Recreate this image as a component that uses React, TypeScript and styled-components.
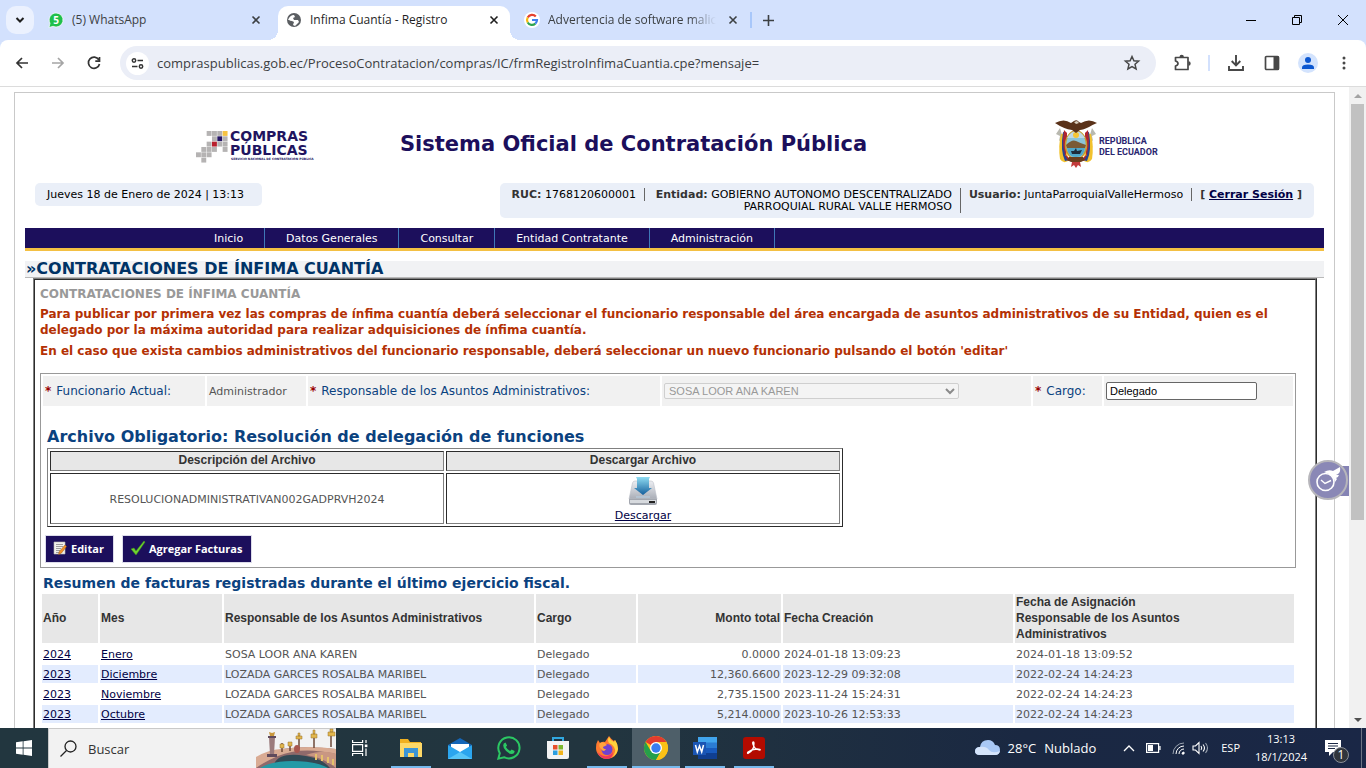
import React from 'react';
import styled, { createGlobalStyle, css } from 'styled-components';

const ui = '"Open Sans", "Noto Sans", sans-serif';
const verdana = '"DejaVu Sans", sans-serif';
const arial = '"Liberation Sans", sans-serif';
const navy = '#1c0f5c';

const GlobalStyle = createGlobalStyle`
  *, *::before, *::after { box-sizing: border-box; }
  body { margin: 0; background: #fff; font-family: ${verdana}; }
  h1, h2, h3, p { margin: 0; }
  button { border: 0; background: none; padding: 0; font: inherit; color: inherit; }
  svg { display: block; flex: none; overflow: visible; }
`;

const Shell = styled.div`
  display: flex;
  flex-direction: column;
  height: 100vh;
  overflow: hidden;
`;

/* ---------- browser frame ---------- */

const TabStrip = styled.header`
  display: flex;
  align-items: flex-end;
  flex: none;
  height: 40px;
  padding-left: 6px;
  background: #d3e1fd;
  color: #3c4043;
  font: 12px/16px ${ui};
`;

const TabSearch = styled.button`
  display: grid;
  place-items: center;
  align-self: center;
  width: 28px;
  height: 28px;
  margin-right: 4px;
  border-radius: 10px;
  background: #ebf1fe;
`;

const Tab = styled.div<{ $active?: boolean; $first?: boolean }>`
  position: relative;
  display: flex;
  align-items: center;
  gap: 8px;
  width: ${p => (p.$active ? 232 : 240)}px;
  height: 34px;
  padding: 0 ${p => (p.$first ? 14 : 8)}px 6px 10px;
  ${p =>
    p.$active &&
    css`
      padding-left: 8px;
      border-radius: 10px 10px 0 0;
      background: #fff;
      color: #1f1f1f;
      &::before,
      &::after {
        content: '';
        position: absolute;
        bottom: 0;
        width: 10px;
        height: 10px;
      }
      &::before {
        right: 100%;
        background: radial-gradient(circle at 0 0, transparent 10px, #fff 10px);
      }
      &::after {
        left: 100%;
        background: radial-gradient(circle at 100% 0, transparent 10px, #fff 10px);
      }
    `}
`;

const TabTitle = styled.span<{ $fade?: boolean }>`
  flex: 1;
  overflow: hidden;
  white-space: nowrap;
  ${p => p.$fade && 'mask-image: linear-gradient(90deg, #000 84%, transparent);'}
`;

const IconButton = styled.button<{ $w?: number; $h?: number }>`
  display: grid;
  place-items: center;
  flex: none;
  width: ${p => p.$w ?? 36}px;
  height: ${p => p.$h ?? 34}px;
`;

const Rule = styled.span<{ $color: string; $gap: number }>`
  width: 2px;
  height: 16px;
  margin: 0 ${p => p.$gap}px;
  background: ${p => p.$color};
`;

const NewTab = styled.div`
  display: flex;
  align-items: center;
  align-self: center;
`;

const WindowControls = styled.div`
  display: flex;
  align-self: center;
  margin-left: auto;
`;

const ToolbarBack = styled.div`
  flex: none;
  background: #d3e1fd;
`;

const Toolbar = styled.div`
  display: flex;
  align-items: center;
  height: 47px;
  padding: 0 4px;
  border-bottom: 1px solid #dcdcdc;
  border-radius: 8px 8px 0 0;
  background: #fff;
  color: #474747;
`;

const Omnibox = styled.div`
  display: flex;
  align-items: center;
  flex: 1;
  height: 34px;
  margin: 0 8px;
  padding: 0 6px;
  border-radius: 17px;
  background: #ebeef7;
`;

const SiteInfo = styled.button`
  display: grid;
  place-items: center;
  width: 23px;
  height: 23px;
  border-radius: 50%;
  background: #fff;
`;

const Address = styled.input`
  flex: 1;
  min-width: 0;
  padding: 0 8px;
  border: 0;
  background: transparent;
  color: #3c3e42;
  font: 13px/20px ${ui};
`;

/* ---------- web page ---------- */

const Viewport = styled.div`
  position: relative;
  display: flex;
  flex: 1;
  min-height: 0;
  overflow: hidden;
`;

const Page = styled.main`
  display: flex;
  flex-direction: column;
  flex: 1;
  min-width: 0;
  margin: 5px 14px 0;
  padding: 0 10px;
  border: 1px solid #c9c9c9;
  border-bottom: 0;
`;

const Banner = styled.div`
  display: flex;
  align-items: center;
  height: 90px;
  padding: 11px 167px 0 171px;
`;

const SiteTitle = styled.h1`
  margin-left: 88px;
  margin-right: auto;
  color: ${navy};
  font: bold 21px/28px ${verdana};
  white-space: nowrap;
`;

const InfoRow = styled.div`
  display: flex;
  justify-content: space-between;
  align-items: flex-start;
  margin: 0 10px 10px;
  color: #000;
  font-size: 11px;
  line-height: 12px;
`;

const DatePill = styled.div`
  padding: 6px 18px 5px 12px;
  border-radius: 5px;
  background: #eaeff8;
`;

const SessionPill = styled.div`
  display: flex;
  align-items: flex-start;
  padding: 5px 4px;
  border-radius: 5px;
  background: #eaeff8;
`;

const SessionItem = styled.div<{ $wide?: boolean }>`
  padding: 1px 8px 0;
  border-right: 1px solid #666;
  text-align: right;
  ${p => p.$wide && 'width: 316px;'}
  &:last-child { border-right: 0; }
  b { color: #333; }
`;

const Link = styled.a`
  color: #000044;
  text-decoration: underline;
`;

const Nav = styled.nav`
  display: flex;
  height: 23px;
  padding-left: 168px;
  border-bottom: 3px solid #f4c043;
  background: ${navy};
`;

const NavLink = styled.a`
  padding: 0 21px;
  border-right: 1px solid #3f78b8;
  color: #fff;
  font-size: 11px;
  line-height: 22px;
  text-decoration: none;
`;

const SectionTitle = styled.h2`
  height: 17px;
  margin-top: 10px;
  padding-left: 1px;
  border-bottom: 1px solid #b9b9b9;
  background: #f1f2f4;
  color: #003366;
  font: bold 16px/16px ${verdana};
`;

const Box = styled.section`
  flex: 1;
  margin: 0 7px 0 8px;
  padding: 6px 19px 0 5px;
  border: 2px ridge #808080;
  border-bottom: 0;
`;

const BoxTitle = styled.h3`
  color: #999;
  font: bold 12px/16px ${verdana};
`;

const Notice = styled.p`
  margin-top: 4px;
  color: #b43104;
  font: bold 12px/16px ${verdana};
  & + & { margin-top: 5px; }
`;

const Panel = styled.form`
  margin-top: 14px;
  padding: 2px 2px 4px;
  border: 1px solid #999;
`;

const Fields = styled.div`
  display: grid;
  grid-template-columns: 162fr 99fr 352fr 369fr 69fr 189fr;
  gap: 2px;
  height: 30px;
`;

const FieldCell = styled.div`
  display: flex;
  align-items: center;
  min-width: 0;
  padding: 0 1px 0 2px;
  background: #f1f1f1;
  color: #555;
  font-size: 11px;
`;

const Label = styled.label`
  color: #0b427f;
  font-size: 12px;
  white-space: nowrap;
  &::before {
    content: '*';
    margin-right: 5px;
    color: #990000;
    font-weight: bold;
  }
`;

const SelectWrap = styled.div`
  position: relative;
  width: 295px;
  svg { position: absolute; right: 4px; top: 5px; }
`;

const Select = styled.select`
  appearance: none;
  display: block;
  width: 100%;
  height: 16px;
  padding: 0 4px;
  border: 1px solid #cfcfcf;
  border-radius: 2px;
  background: #f4f4f4;
  color: #999;
  font: 11px/14px ${arial};
  opacity: 1;
`;

const TextBox = styled.input`
  width: 151px;
  height: 18px;
  padding: 1px 3px;
  border: 1px solid #666;
  border-radius: 2px;
  background: #fff;
  color: #000;
  font: 11px/14px ${arial};
`;

const FileTitle = styled.h3`
  margin: 21px 0 1px 4px;
  color: #0b427f;
  font: bold 16px/20px ${verdana};
`;

const FileTable = styled.table`
  width: 796px;
  max-width: 100%;
  margin-left: 4px;
  border: 1px outset #808080;
  border-spacing: 2px;
  table-layout: fixed;
  th, td {
    padding: 2px 1px 0;
    border: 1px inset #808080;
    text-align: center;
  }
  th {
    padding: 0 1px 2px;
    background: #e7e7e7;
    color: #333;
    font: bold 12px/16px ${arial};
  }
  td {
    color: #555;
    font: 11px/15px ${verdana};
  }
  svg { margin: 0 auto; }
`;

const Actions = styled.div`
  display: flex;
  gap: 8px;
  margin: 8px 0 0 2px;
`;

const ActionButton = styled.button`
  display: flex;
  align-items: center;
  gap: 3px;
  height: 28px;
  padding: 0 9px 0 7px;
  border: 1px solid #dcdcea;
  background: ${navy};
  color: #fff;
  font: bold 11px/16px ${ui};
`;

const SummaryTitle = styled.h3`
  margin: 7px 0 1px 3px;
  color: #0b427f;
  font: bold 14px/16px ${verdana};
`;

const SummaryTable = styled.table`
  width: 100%;
  border-spacing: 2px;
  table-layout: fixed;
  th, td {
    padding: 2px 1px 0;
    text-align: left;
  }
  th {
    height: 49px;
    padding: 0 1px 1px;
    background: #e7e7e7;
    color: #333;
    font: bold 12px/16px ${arial};
  }
  td {
    color: #555;
    font: 11px/16px ${verdana};
    white-space: nowrap;
  }
  tbody tr:nth-child(even) td { background: #e3ecfe; }
  th:nth-child(5), td:nth-child(5) { text-align: right; }
`;

const HeadText = styled.div`
  max-width: 190px;
`;

const Scrollbar = styled.div`
  display: flex;
  flex-direction: column;
  align-items: center;
  flex: none;
  width: 17px;
  background: #f1f1f1;
`;

const Thumb = styled.div`
  flex: 416;
  width: 13px;
  background: #c1c1c1;
`;

const TrackRest = styled.div`
  flex: 191;
`;

const HelpBadge = styled.button`
  position: absolute;
  top: 373px;
  right: 17px;
`;

/* ---------- taskbar ---------- */

const Taskbar = styled.footer`
  display: flex;
  flex: none;
  height: 40px;
  background: linear-gradient(90deg, #22363f 0%, #22353f 45%, #1a2842 75%, #1a2746 100%);
  color: #fff;
  font: 14px/18px ${ui};
`;

const SearchBox = styled.label`
  display: flex;
  align-items: center;
  width: 288px;
  padding-left: 11px;
  border: 1px solid #c9c9c9;
  border-right: 0;
  border-bottom: 0;
  background: #f2f2f2;
  color: #222;
  svg:last-child { align-self: flex-end; }
`;

const SearchInput = styled.input`
  flex: 1;
  min-width: 0;
  padding: 0 0 0 11px;
  border: 0;
  background: transparent;
  font: 13px/18px ${ui};
  &::placeholder { color: #333; opacity: 1; }
`;

const Apps = styled.div`
  display: flex;
  gap: 1px;
  margin-left: 3px;
`;

const AppButton = styled.button<{ $open?: boolean; $current?: boolean }>`
  position: relative;
  display: grid;
  place-items: center;
  width: 48px;
  height: 40px;
  background: ${p => (p.$current ? '#4e5f69' : 'none')};
  ${p =>
    p.$open &&
    css`
      &::after {
        content: '';
        position: absolute;
        bottom: 0;
        left: ${p.$current ? 0 : 4}px;
        right: ${p.$current ? 0 : 4}px;
        height: 2px;
        background: #76b9ed;
      }
    `}
`;

const Tray = styled.div`
  display: flex;
  align-items: center;
  margin-left: auto;
`;

const Weather = styled.button`
  display: flex;
  align-items: center;
  gap: 8px;
  margin-right: 22px;
  font: 13px/18px ${ui};
`;

const Language = styled.button`
  margin: 0 8px 0 11px;
  font: 11px/16px ${ui};
`;

const Clock = styled.div`
  width: 66px;
  font: 11px/18px ${ui};
  text-align: center;
`;

const Notifications = styled.button`
  position: relative;
  width: 36px;
  height: 40px;
  margin-right: 11px;
  svg { position: absolute; left: 11px; top: 12px; }
`;

const Count = styled.span`
  position: absolute;
  left: 19px;
  top: 19px;
  width: 16px;
  height: 16px;
  border: 1px solid #8a8f98;
  border-radius: 50%;
  background: #30353c;
  font: 12px/14px ${ui};
  text-align: center;
`;

const DesktopEdge = styled.div`
  width: 5px;
  height: 40px;
  border-left: 1px solid #6b7484;
`;

/* ---------- drawings ---------- */

const CloseIcon = () => (
  <svg width="8" height="8" viewBox="0 0 8 8" stroke="currentColor" strokeWidth="1.6">
    <path d="M.5.5l7 7M7.500.5l-7 7" />
  </svg>
);

const ComprasLogo = () => {
  const cells: [number, number, string][] = [
    [2, 0, '#b5b3b3'], [3, 0, '#b5b3b3'], [4, 0, '#b5b3b3'], [5, 0, '#f6c343'],
    [3, 1, '#b5b3b3'], [4, 1, '#241566'], [5, 1, '#b5b3b3'],
    [2, 2, '#b5b3b3'], [3, 2, '#b81f2d'], [4, 2, '#b5b3b3'], [5, 2, '#b5b3b3'],
    [1, 3, '#b5b3b3'], [2, 3, '#b5b3b3'], [3, 3, '#b5b3b3'], [5, 3, '#b5b3b3'],
    [0, 4, '#b5b3b3'], [1, 4, '#b5b3b3'], [2, 4, '#b5b3b3'],
    [1, 5, '#b5b3b3'],
  ];
  return (
    <svg width="116" height="40" viewBox="0 -6 116 40" role="img" aria-label="Compras Públicas">
      {cells.map(([c, r, fill]) => (
        <rect key={`${c}-${r}`} x={c * 5.33} y={1 + r * 5.33} width="4.9" height="4.9" fill={fill} />
      ))}
      <g fill="#21145f" fontFamily="DejaVu Sans, sans-serif" fontWeight="bold">
        <text x="34" y="11" fontSize="14">COMPRAS</text>
        <text x="34" y="25" fontSize="14">PÚBLICAS</text>
        <text x="35" y="30" fontSize="3">SERVICIO NACIONAL DE CONTRATACIÓN PÚBLICA</text>
      </g>
    </svg>
  );
};

const EcuadorLogo = () => (
  <svg width="102" height="50" viewBox="0 0 102 50" role="img" aria-label="República del Ecuador">
    <path d="M5 9L1 15l4 2-1 5 4-3zM37 9l4 6-4 2 1 5-4-3z" fill="#b9b9b0" />
    <path d="M6 15q-3 12-1 25 3 5 8 2l-2-28z" fill="#f2c22e" />
    <path d="M36 15q3 12 1 25-3 5-8 2l2-28z" fill="#f2c22e" />
    <path d="M8 13l4 1-2 22 5 5-5 1q-5-10-2-29z" fill="#27458f" />
    <path d="M34 13l-4 1 2 22-5 5 5 1q5-10 2-29z" fill="#27458f" />
    <path d="M9 11l3 3-1 22 5 5-3 1q-7-12-4-31zM33 11l-3 3 1 22-5 5 3 1q7-12 4-31z" fill="#b3242e" />
    <ellipse cx="21" cy="26" rx="10.500" ry="14" fill="#8cc4d9" stroke="#c99a2b" strokeWidth="1.500" />
    <path d="M12 19q4-7 9-7t9 7z" fill="#bfd9e6" />
    <circle cx="21" cy="16" r="3" fill="#f5c534" />
    <path d="M11 26q6-6 10-4t10 4l-1 3H12z" fill="#7a5a35" />
    <path d="M12 29h18q-1 9-9 9t-9-9z" fill="#4fa7c9" />
    <path d="M16 32h3l2-3 1 3 5-1-2 4h-8z" fill="#1e2b3a" />
    <path d="M0 4q9-5 16 0l3-2q3-2 5 1l2 1q8-5 16 0-5 2-8 4-6 3-9 3l-4 3-4-3Q9 10 0 4z" fill="#5a3219" />
    <path d="M19 3l3-1 2 2-3 1z" fill="#d8cfbf" />
    <path d="M14 38h14l2 3-4 2H16l-4-2z" fill="#6b3e1d" />
    <path d="M17 43h8l1 5-3-2-2 3-2-3-3 2z" fill="#c23a3a" />
    <g fill="#2b2670" fontFamily="Roboto, sans-serif" fontWeight="bold" fontSize="9">
      <text x="44" y="25">REPÚBLICA</text>
      <text x="44" y="36">DEL ECUADOR</text>
    </g>
  </svg>
);

const DownloadDisk = () => (
  <svg width="32" height="32" viewBox="0 0 32 32" aria-hidden="true">
    <defs>
      <linearGradient id="disk" x1="0" y1="0" x2="0" y2="1">
        <stop offset="0" stopColor="#eceef2" />
        <stop offset="1" stopColor="#a9adb6" />
      </linearGradient>
      <linearGradient id="arrow" x1="0" y1="0" x2="0" y2="1">
        <stop offset="0" stopColor="#8fdcf2" />
        <stop offset="1" stopColor="#155f9c" />
      </linearGradient>
    </defs>
    <path d="M8 5h16q2 0 2.500 2L30 23H2L5.500 7Q6 5 8 5z" fill="url(#disk)" stroke="#bcc0c8" strokeWidth=".6" />
    <path d="M2 23h28v4q0 2-2 2H4q-2 0-2-2z" fill="#a3a7af" />
    <path d="M3 24h26v3H3z" fill="#d7dade" />
    <path d="M22 25h6v2h-6z" fill="#222" />
    <path d="M9 21h14" stroke="#b9d3e6" />
    <path d="M9 1h14l-1 2v9h3l-9 7-9-7h3V3z" fill="url(#arrow)" />
  </svg>
);

const EditIcon = () => (
  <svg width="15" height="16" viewBox="0 0 15 16" aria-hidden="true">
    <path d="M1 1h11v12H1z" fill="#f1f1ec" stroke="#b9b9b0" strokeWidth=".6" />
    <path d="M3 3.500h7M3 5.500h7M3 7.500h5M3 9.500h4M3 11.500h4" stroke="#888" strokeWidth=".8" />
    <path d="M12 4l1.500 1.500-5 6.500-3 1.500.8-3z" fill="#f0932b" stroke="#a35a12" strokeWidth=".5" />
  </svg>
);

const CheckIcon = () => (
  <svg width="16" height="16" viewBox="0 0 16 16" aria-hidden="true">
    <path d="M1 8l3-1 2 3 8-10 1 1-9 13z" fill="#6fd12f" stroke="#3f9417" strokeWidth=".5" />
  </svg>
);

const HelpIcon = () => (
  <svg width="41" height="40" viewBox="0 0 41 40" aria-hidden="true">
    <path d="M28 6h13v30H28z" fill="#8583b4" />
    <circle cx="20" cy="20" r="19" fill="#8a88b6" stroke="#b7b6bb" strokeWidth="2" />
    <circle cx="17.500" cy="22" r="8.500" fill="none" stroke="#fff" strokeWidth="1.600" />
    <path d="M13 20l4 3.500 6-3" fill="none" stroke="#fff" strokeWidth="1.400" />
    <path d="M16 12q5-3 9-1l7-4q1 5-2 7l-2 1h3q-1 3-3 3l1 1-2 3q-1-7-11-10z" fill="#fff" />
  </svg>
);

const ChromeIcon = () => (
  <svg width="24" height="24" viewBox="0 0 24 24" aria-hidden="true">
    <circle cx="12" cy="12" r="12" fill="#fbc116" />
    <path d="M12 12L1.600 6A12 12 0 0 1 22.400 6H12z" fill="#e33b2e" />
    <path d="M1.600 6A12 12 0 0 0 12 24l5.200-9L12 12 6.800 15z" fill="#269f4a" />
    <path d="M12 24a12 12 0 0 0 10.400-18H12l5.200 9z" fill="#fbc116" />
    <circle cx="12" cy="12" r="6" fill="#fff" />
    <circle cx="12" cy="12" r="4.700" fill="#3a7df0" />
  </svg>
);

const BridgeArt = () => (
  <svg width="80" height="39" viewBox="0 0 80 39" aria-hidden="true">
    <path d="M0 31q10-8 22-10 22-5 58-1v19H0z" fill="#8f6a6b" />
    <path d="M0 28q14-8 26-8 28-4 54 0v5Q45 17 22 27 8 33 0 39z" fill="#d9ab93" />
    <path d="M17 39q2-15 26-13 22 2 31 13z" fill="#324a55" />
    <path d="M4 39q12-7 32-7 24 0 36 7z" fill="#259aa6" />
    <path d="M50 26q16 2 30 13V25q-12-5-30 1z" fill="#c99782" />
    <path d="M13 8h6l-1 18h-4z" fill="#9b7b7c" />
    <path d="M11 25h10v3H11zM12 7h8v2h-8z" fill="#5f4a5c" />
    <path d="M14 7l-1-4 3 1 3-1-1 4z" fill="#c8973c" />
    <path d="M26 23v-9M34 22v-9M43 20V9M58 19V5M75 18V4" stroke="#6d4a3a" strokeWidth="1.500" />
    <g fill="#e2b74d" stroke="#96722f" strokeWidth=".5">
      <path d="M24 15h4v4h-4zM32 13h4v4h-4zM40 7h6v3h-6zM42 4h2v3h-2z" />
      <path d="M55 5h6v4h-6zM57 1h2v4h-2zM72 3h7v4h-7zM74 0h3v3h-3z" />
    </g>
    <ellipse cx="41" cy="20" rx="3" ry="4" fill="#a8574f" />
    <path d="M60 25v6M66 26v6M72 28v6M77 30v6" stroke="#e6c16b" strokeWidth="2" />
  </svg>
);

type Row = [string, string, string, string, string, string, string];

const headings = [
  'Año',
  'Mes',
  'Responsable de los Asuntos Administrativos',
  'Cargo',
  'Monto total',
  'Fecha Creación',
  'Fecha de Asignación Responsable de los Asuntos Administrativos',
];

const widths = [56, 122, 310, 100, 143, 230, 279];

const rows: Row[] = [
  ['2024', 'Enero', 'SOSA LOOR ANA KAREN', 'Delegado', '0.0000', '2024-01-18 13:09:23', '2024-01-18 13:09:52'],
  ['2023', 'Diciembre', 'LOZADA GARCES ROSALBA MARIBEL', 'Delegado', '12,360.6600', '2023-12-29 09:32:08', '2022-02-24 14:24:23'],
  ['2023', 'Noviembre', 'LOZADA GARCES ROSALBA MARIBEL', 'Delegado', '2,735.1500', '2023-11-24 15:24:31', '2022-02-24 14:24:23'],
  ['2023', 'Octubre', 'LOZADA GARCES ROSALBA MARIBEL', 'Delegado', '5,214.0000', '2023-10-26 12:53:33', '2022-02-24 14:24:23'],
];

const BrowserFrame = () => (
  <>
    <TabStrip>
      <TabSearch aria-label="Buscar pestañas">
        <svg width="10" height="10" viewBox="0 0 10 10" fill="none" stroke="#1f1f1f" strokeWidth="2">
          <path d="M1.500 3L5 6.500 8.500 3" />
        </svg>
      </TabSearch>
      <Tab $first>
        <svg width="16" height="16" viewBox="0 0 16 16">
          <path d="M8 1a7 7 0 1 1-3 13.300L1 15.500l1-4.200A7 7 0 0 1 8 1z" fill="#1fbf4b" stroke="#fff" strokeWidth=".7" />
          <text x="8" y="12" fontSize="10" fontWeight="bold" fontFamily="Open Sans, sans-serif" fill="#fff" textAnchor="middle">5</text>
        </svg>
        <TabTitle>(5) WhatsApp</TabTitle>
        <IconButton $w={16} $h={16} aria-label="Cerrar"><CloseIcon /></IconButton>
      </Tab>
      <Tab $active>
        <svg width="16" height="16" viewBox="0 0 16 16">
          <circle cx="8" cy="8" r="7" fill="#5b5e62" />
          <path d="M2 8q2-5 6-5l1 2-2 1 1 2 4 0 1 2-3 3-1 1-2-1 1-3-2-1q-2 0-3-1z" fill="#fff" />
        </svg>
        <TabTitle>Infima Cuantía - Registro</TabTitle>
        <IconButton $w={16} $h={16} aria-label="Cerrar"><CloseIcon /></IconButton>
      </Tab>
      <Tab>
        <svg width="20" height="16" viewBox="0 0 20 16">
          <circle cx="12" cy="8" r="8" fill="#fff" />
          <g fill="none" strokeWidth="2.200">
            <path d="M15.800 4.500A5 5 0 0 0 7.700 5.500" stroke="#e4412f" />
            <path d="M7.700 5.500a5 5 0 0 0 0 5" stroke="#f6b90c" />
            <path d="M7.700 10.500a5 5 0 0 0 7.600 1.200" stroke="#30a552" />
            <path d="M15.300 11.700A5 5 0 0 0 17 8h-5" stroke="#3f80ee" />
          </g>
        </svg>
        <TabTitle $fade>Advertencia de software malicioso</TabTitle>
        <IconButton $w={18} $h={16} aria-label="Cerrar"><CloseIcon /></IconButton>
      </Tab>
      <NewTab>
        <Rule $color="#a8c7fa" $gap={0} />
        <IconButton $w={32} aria-label="Nueva pestaña">
          <svg width="11" height="11" viewBox="0 0 11 11" stroke="#3c4043" strokeWidth="1.600">
            <path d="M5.500 0v11M0 5.500h11" />
          </svg>
        </IconButton>
      </NewTab>
      <WindowControls>
        <IconButton $w={46} aria-label="Minimizar">
          <svg width="10" height="10" viewBox="0 0 10 10" stroke="#000"><path d="M0 5.500h10" /></svg>
        </IconButton>
        <IconButton $w={46} aria-label="Restaurar">
          <svg width="10" height="10" viewBox="0 0 10 10" stroke="#000" fill="none">
            <path d="M.5 2.500h7v7h-7zM2.500 2.500v-2h7v7h-2" />
          </svg>
        </IconButton>
        <IconButton $w={46} aria-label="Cerrar ventana">
          <svg width="10" height="10" viewBox="0 0 10 10" stroke="#000"><path d="M0 0l10 10M10 0L0 10" /></svg>
        </IconButton>
      </WindowControls>
    </TabStrip>
    <ToolbarBack>
      <Toolbar>
        <IconButton aria-label="Atrás">
          <svg width="14" height="12" viewBox="0 0 14 12" fill="none" stroke="#333" strokeWidth="1.700">
            <path d="M13 6H2M7 1L2 6l5 5" />
          </svg>
        </IconButton>
        <IconButton aria-label="Adelante">
          <svg width="14" height="12" viewBox="0 0 14 12" fill="none" stroke="#a5a5a5" strokeWidth="1.700">
            <path d="M1 6h11M7 1l5 5-5 5" />
          </svg>
        </IconButton>
        <IconButton aria-label="Recargar">
          <svg width="14" height="14" viewBox="0 0 14 14" fill="none" stroke="#333" strokeWidth="1.700">
            <path d="M11.800 3.800A5.600 5.600 0 1 0 12.500 8M12.500 1v4.200H8.300" />
          </svg>
        </IconButton>
        <Omnibox>
          <SiteInfo aria-label="Información del sitio">
            <svg width="13" height="11" viewBox="0 0 13 11" fill="none" stroke="#333" strokeWidth="1.500">
              <circle cx="3" cy="2.500" r="1.700" />
              <circle cx="10" cy="8.500" r="1.700" />
              <path d="M6.500 2.500H12M1 8.500h5.500" />
            </svg>
          </SiteInfo>
          <Address
            aria-label="Dirección"
            defaultValue="compraspublicas.gob.ec/ProcesoContratacion/compras/IC/frmRegistroInfimaCuantia.cpe?mensaje="
          />
          <IconButton aria-label="Marcador">
            <svg width="18" height="18" viewBox="0 0 18 18" fill="none" stroke="#474747" strokeWidth="1.500">
              <path d="M9 2.500l1.900 4.300 4.700.4-3.600 3.100 1.100 4.600L9 12.500l-4.100 2.400L6 10.300 2.400 7.200l4.700-.4z" />
            </svg>
          </IconButton>
        </Omnibox>
        <IconButton aria-label="Extensiones">
          <svg width="18" height="18" viewBox="0 0 18 18">
            <path
              d="M2.500 3.500H15V15.500H2.500V12q2.500-.7 2.500-2.500T2.500 7z"
              fill="none" stroke="#474747" strokeWidth="1.700" strokeLinejoin="round"
            />
            <path d="M6.500 3a2.200 2.200 0 0 1 4.400 0zM15.500 7.300a2.200 2.200 0 0 1 0 4.400z" fill="#474747" />
          </svg>
        </IconButton>
        <Rule $color="#d3e1fd" $gap={8} />
        <IconButton aria-label="Descargas">
          <svg width="18" height="18" viewBox="0 0 18 18" fill="none" stroke="#474747" strokeWidth="1.900">
            <path d="M9 1v10M4.700 7L9 11.300 13.300 7M2 12v4h14v-4" />
          </svg>
        </IconButton>
        <IconButton aria-label="Panel lateral">
          <svg width="16" height="16" viewBox="0 0 16 16">
            <rect x="1.500" y="1.500" width="13" height="13" rx="1" fill="none" stroke="#474747" strokeWidth="1.700" />
            <path d="M9.500 1.500H15v13H9.500z" fill="#474747" />
          </svg>
        </IconButton>
        <IconButton aria-label="Perfil">
          <svg width="20" height="20" viewBox="0 0 20 20">
            <circle cx="10" cy="10" r="10" fill="#d3e3fd" />
            <circle cx="10" cy="7" r="3" fill="#0b57d0" />
            <path d="M4 16v-1.500q0-3 6-3t6 3V16z" fill="#0b57d0" />
          </svg>
        </IconButton>
        <IconButton aria-label="Menú">
          <svg width="4" height="14" viewBox="0 0 4 14" fill="#474747">
            <circle cx="2" cy="2" r="1.500" />
            <circle cx="2" cy="7" r="1.500" />
            <circle cx="2" cy="12" r="1.500" />
          </svg>
        </IconButton>
      </Toolbar>
    </ToolbarBack>
  </>
);

const WindowsTaskbar = () => (
  <Taskbar>
    <AppButton aria-label="Inicio">
      <svg width="16" height="16" viewBox="0 0 16 16" fill="#fff">
        <path d="M0 2.300l6.700-1v6.200H0zM7.500 1.200L16 0v7.500H7.500zM0 8.400h6.700v6.300L0 13.700zM7.500 8.400H16V16l-8.500-1.200z" />
      </svg>
    </AppButton>
    <SearchBox>
      <svg width="17" height="17" viewBox="0 0 17 17" fill="none" stroke="#222" strokeWidth="1.300">
        <circle cx="10.500" cy="6.500" r="5.500" />
        <path d="M6.500 10.500L.5 16.500" />
      </svg>
      <SearchInput aria-label="Buscar" placeholder="Buscar" />
      <BridgeArt />
    </SearchBox>
    <AppButton aria-label="Vista de tareas">
      <svg width="16" height="16" viewBox="0 0 16 16" fill="none" stroke="#fff" strokeWidth="1.200">
        <path d="M.6 0v2.500h10V0M.6 16v-2.500h10V16M.6 4.600h10v6.800H.6zM14 0v3M14 8.500V16" />
        <path d="M12.800 4.500h2.600v2.600h-2.600z" fill="#fff" stroke="none" />
      </svg>
    </AppButton>
    <Apps>
      <AppButton $open aria-label="Explorador de archivos">
        <svg width="22" height="20" viewBox="0 0 22 20">
          <path d="M0 1h8l2 3h11v14H0z" fill="#f0b021" />
          <path d="M0 5h22v14H0z" fill="#fdd868" />
          <path d="M4 10h14v9h-4v-4H8v4H4z" fill="#3d95d6" />
        </svg>
      </AppButton>
      <AppButton aria-label="Correo">
        <svg width="24" height="22" viewBox="0 0 24 22">
          <path d="M0 8l12-7 12 7-12 9z" fill="#1466b8" />
          <path d="M3 7h18v8H3z" fill="#fff" />
          <path d="M0 8l12 7 12-7v14H0z" fill="#2ba5ee" />
          <path d="M0 22l12-7 12 7z" fill="#57c5f7" />
        </svg>
      </AppButton>
      <AppButton aria-label="WhatsApp">
        <svg width="24" height="24" viewBox="0 0 24 24">
          <path d="M1.300 22.700l1.500-5.500A10.600 10.600 0 1 1 7 21.200z" fill="none" stroke="#2bc763" strokeWidth="2" />
          <path d="M8.500 6.500l1.600 3-1.200 1.500q1.500 2.700 4.200 4l1.500-1.600 3 1.500q0 3-3 3-2.600 0-5.500-2.800T6.200 9.500q0-2.500 2.300-3z" fill="#2bc763" />
        </svg>
      </AppButton>
      <AppButton aria-label="Microsoft Store">
        <svg width="24" height="24" viewBox="0 0 24 24">
          <path d="M7 6V2h10v4" fill="none" stroke="#31a8e0" strokeWidth="2" />
          <path d="M1 5h22v16q0 2-2 2H3q-2 0-2-2z" fill="#f3f3f3" />
          <path d="M7 9h4.500v4.500H7z" fill="#e8502a" />
          <path d="M12.500 9H17v4.500h-4.500z" fill="#7cb82f" />
          <path d="M7 14.500h4.500V19H7z" fill="#2d9fe0" />
          <path d="M12.500 14.500H17V19h-4.500z" fill="#f3b41b" />
        </svg>
      </AppButton>
      <AppButton $open aria-label="Firefox">
        <svg width="24" height="24" viewBox="0 0 24 24">
          <path d="M12 23A11 11 0 0 1 1 12q0-5 2-8l2 3q3-2 5-1l4-6q2 3 5 5l1-1q3 4 3 9a11 11 0 0 1-11 10z" fill="#ff7a2f" />
          <path d="M14 1q1 3 5 5l1-2q3 4 3 9-1 6-6 8 5-5 2-10-2-3-5-4-2-3 0-6z" fill="#ffd23c" />
          <circle cx="12" cy="13.500" r="5.500" fill="#7142cf" />
          <path d="M5 7q4-2 7 2l-4 2q0 2 3 2-2 4-5 0-3-3-1-6z" fill="#ffa53d" />
          <path d="M2 15q4 6 10 5 5-1 6-5 0 8-6 8-7 0-10-8z" fill="#f0375f" />
        </svg>
      </AppButton>
      <AppButton $open $current aria-label="Chrome"><ChromeIcon /></AppButton>
      <AppButton $open aria-label="Word">
        <svg width="24" height="22" viewBox="0 0 24 22">
          <path d="M5 0h19v6H5z" fill="#41a5ee" />
          <path d="M5 5.500h19V11H5z" fill="#2b7cd3" />
          <path d="M5 11h19v5.500H5z" fill="#185abd" />
          <path d="M5 16h19v6H5z" fill="#103f91" />
          <path d="M0 5h13v13H0z" fill="#1a55b4" />
          <path d="M2.500 8l1.800 7 2.200-6 2.200 6 1.800-7" fill="none" stroke="#fff" strokeWidth="1.500" />
        </svg>
      </AppButton>
      <AppButton $open aria-label="Acrobat">
        <svg width="22" height="22" viewBox="0 0 22 22">
          <rect width="22" height="22" rx="3" fill="#b30b00" />
          <path d="M5 16.500q6-3 6-10 0-2-1-1.500-1 1 1 4.500t6 3.500q1-1-3-1-5 0-9 3-1 1 0 1.500z" fill="none" stroke="#fff" strokeWidth="1.300" />
        </svg>
      </AppButton>
    </Apps>
    <Tray>
      <Weather>
        <svg width="25" height="18" viewBox="0 0 25 18">
          <path d="M5 16q-5 0-5-4t5-4q1-7 8-7 5 0 7 5 5 0 5 5t-5 5z" fill="#a9c8f5" />
          <path d="M0 12q1-4 5-4 6-1 9 3t11 1q-1 4-5 4H5q-5 0-5-4z" fill="#d5e4fb" />
        </svg>
        <span>28°C</span>
        <span>Nublado</span>
      </Weather>
      <IconButton $w={22} aria-label="Iconos ocultos">
        <svg width="12" height="8" viewBox="0 0 12 8" fill="none" stroke="#fff" strokeWidth="1.300"><path d="M1 7l5-5 5 5" /></svg>
      </IconButton>
      <IconButton $w={26} aria-label="Batería">
        <svg width="15" height="10" viewBox="0 0 15 10" fill="none" stroke="#fff" strokeWidth="1.200">
          <path d="M.6.6h12v8.800H.6zM14 3v4" />
          <path d="M2 2h5v6H2z" fill="#fff" stroke="none" />
        </svg>
      </IconButton>
      <IconButton $w={24} aria-label="Red">
        <svg width="13" height="13" viewBox="0 0 13 13" fill="none" stroke="#fff">
          <path d="M1 12A11 11 0 0 1 12 1" stroke="#9aa3b0" />
          <path d="M4 12a8 8 0 0 1 8-8M7 12a5 5 0 0 1 5-5" />
          <path d="M10 12a2 2 0 0 1 2-2v2z" fill="#fff" />
        </svg>
      </IconButton>
      <IconButton $w={20} aria-label="Volumen">
        <svg width="17" height="14" viewBox="0 0 17 14" fill="none" stroke="#fff" strokeWidth="1.100">
          <path d="M1 5h2.500L7 1.500v11L3.500 9H1zM9 5q1.500 2 0 4M11 3.500q3 3.500 0 7" />
          <path d="M13.500 2q4 5 0 10" stroke="#9aa3b0" />
        </svg>
      </IconButton>
      <Language>ESP</Language>
      <Clock>
        <div>13:13</div>
        <div>18/1/2024</div>
      </Clock>
      <Notifications aria-label="Notificaciones">
        <svg width="16" height="16" viewBox="0 0 16 16">
          <path d="M0 0h16v12H8l-4 4v-4H0z" fill="#fff" />
          <path d="M3 3.500h10M3 6h10M3 8.500h7" stroke="#1b2845" />
        </svg>
        <Count>1</Count>
      </Notifications>
      <DesktopEdge />
    </Tray>
  </Taskbar>
);

export default function App() {
  return (
    <>
      <GlobalStyle />
      <Shell>
        <BrowserFrame />
        <Viewport>
          <Page>
            <Banner>
              <ComprasLogo />
              <SiteTitle>Sistema Oficial de Contratación Pública</SiteTitle>
              <EcuadorLogo />
            </Banner>
            <InfoRow>
              <DatePill>Jueves 18 de Enero de 2024 | 13:13</DatePill>
              <SessionPill>
                <SessionItem><b>RUC:</b> 1768120600001</SessionItem>
                <SessionItem $wide>
                  <b>Entidad:</b> GOBIERNO AUTONOMO DESCENTRALIZADO PARROQUIAL RURAL VALLE HERMOSO
                </SessionItem>
                <SessionItem><b>Usuario:</b> JuntaParroquialValleHermoso</SessionItem>
                <SessionItem>
                  <b>[ <Link href="#salir">Cerrar Sesión</Link> ]</b>
                </SessionItem>
              </SessionPill>
            </InfoRow>
            <Nav>
              {['Inicio', 'Datos Generales', 'Consultar', 'Entidad Contratante', 'Administración'].map(item => (
                <NavLink key={item} href="#menu">{item}</NavLink>
              ))}
            </Nav>
            <SectionTitle>»CONTRATACIONES DE ÍNFIMA CUANTÍA</SectionTitle>
            <Box>
              <BoxTitle>CONTRATACIONES DE ÍNFIMA CUANTÍA</BoxTitle>
              <Notice>
                Para publicar por primera vez las compras de ínfima cuantía deberá seleccionar el funcionario
                responsable del área encargada de asuntos administrativos de su Entidad, quien es el delegado por
                la máxima autoridad para realizar adquisiciones de ínfima cuantía.
              </Notice>
              <Notice>
                En el caso que exista cambios administrativos del funcionario responsable, deberá seleccionar un
                nuevo funcionario pulsando el botón 'editar'
              </Notice>
              <Panel onSubmit={e => e.preventDefault()}>
                <Fields>
                  <FieldCell><Label as="span">Funcionario Actual:</Label></FieldCell>
                  <FieldCell>Administrador</FieldCell>
                  <FieldCell>
                    <Label htmlFor="responsable">Responsable de los Asuntos Administrativos:</Label>
                  </FieldCell>
                  <FieldCell>
                    <SelectWrap>
                      <Select id="responsable" disabled>
                        <option>SOSA LOOR ANA KAREN</option>
                      </Select>
                      <svg width="10" height="7" viewBox="0 0 10 7" fill="none" stroke="#8a8a8a" strokeWidth="2">
                        <path d="M1 1l4 4 4-4" />
                      </svg>
                    </SelectWrap>
                  </FieldCell>
                  <FieldCell><Label htmlFor="cargo">Cargo:</Label></FieldCell>
                  <FieldCell><TextBox id="cargo" defaultValue="Delegado" /></FieldCell>
                </Fields>
                <FileTitle>Archivo Obligatorio: Resolución de delegación de funciones</FileTitle>
                <FileTable>
                  <thead>
                    <tr><th>Descripción del Archivo</th><th>Descargar Archivo</th></tr>
                  </thead>
                  <tbody>
                    <tr>
                      <td>RESOLUCIONADMINISTRATIVAN002GADPRVH2024</td>
                      <td>
                        <DownloadDisk />
                        <Link href="#descargar">Descargar</Link>
                      </td>
                    </tr>
                  </tbody>
                </FileTable>
                <Actions>
                  <ActionButton type="button"><EditIcon />Editar</ActionButton>
                  <ActionButton type="button"><CheckIcon />Agregar Facturas</ActionButton>
                </Actions>
              </Panel>
              <SummaryTitle>Resumen de facturas registradas durante el último ejercicio fiscal.</SummaryTitle>
              <SummaryTable>
                <colgroup>
                  {widths.map((w, i) => <col key={i} width={w} />)}
                </colgroup>
                <thead>
                  <tr>{headings.map(h => <th key={h}>{h.startsWith('Fecha de') ? <HeadText>{h}</HeadText> : h}</th>)}</tr>
                </thead>
                <tbody>
                  {rows.map(row => (
                    <tr key={row[1]}>
                      {row.map((cell, i) => (
                        <td key={i}>{i < 2 ? <Link href="#detalle">{cell}</Link> : cell}</td>
                      ))}
                    </tr>
                  ))}
                </tbody>
              </SummaryTable>
            </Box>
          </Page>
          <HelpBadge aria-label="Ayuda"><HelpIcon /></HelpBadge>
          <Scrollbar>
            <IconButton $w={17} $h={17} aria-label="Subir">
              <svg width="8" height="4" viewBox="0 0 8 4" fill="#a3a3a3"><path d="M0 4l4-4 4 4z" /></svg>
            </IconButton>
            <Thumb />
            <TrackRest />
            <IconButton $w={17} $h={17} aria-label="Bajar">
              <svg width="8" height="4" viewBox="0 0 8 4" fill="#505050"><path d="M0 0l4 4 4-4z" /></svg>
            </IconButton>
          </Scrollbar>
        </Viewport>
        <WindowsTaskbar />
      </Shell>
    </>
  );
}
